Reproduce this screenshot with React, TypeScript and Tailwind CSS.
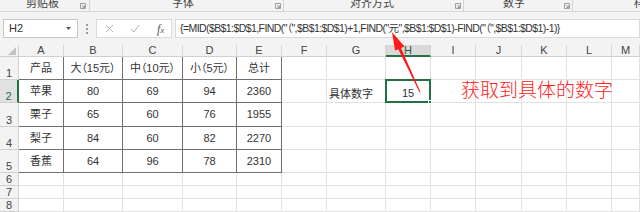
import React from "react";

const cols = [
  { key: "A", w: 45 },
  { key: "B", w: 59 },
  { key: "C", w: 60 },
  { key: "D", w: 54 },
  { key: "E", w: 45 },
  { key: "F", w: 45 },
  { key: "G", w: 59 },
  { key: "H", w: 45 },
  { key: "I", w: 45 },
  { key: "J", w: 46 },
  { key: "K", w: 45 },
  { key: "L", w: 45 },
  { key: "M", w: 28 },
];

const rowHeights = [23, 23, 24, 23, 23, 13, 13, 13];

const table: string[][] = [
  ["产品", "大（15元）", "中（10元）", "小（5元）", "总计"],
  ["苹果", "80", "69", "94", "2360"],
  ["栗子", "65", "60", "76", "1955"],
  ["梨子", "84", "60", "82", "2270"],
  ["香蕉", "64", "96", "78", "2310"],
];

const groups = [
  { label: "剪贴板", left: 26, launcher: 80, sep: 89 },
  { label: "字体", left: 172, launcher: 275, sep: 283 },
  { label: "对齐方式", left: 350, launcher: 455, sep: 463 },
  { label: "数字", left: 503, launcher: 564, sep: 572 },
  { label: "样", left: 634, launcher: -100, sep: -100 },
];

const font = {
  fontFamily: '"Liberation Sans", "Noto Sans CJK SC", sans-serif',
  fontFeatureSettings: '"palt"',
};

function Launcher({ x }: { x: number }) {
  return (
    <svg className="absolute top-[3px]" style={{ left: x }} width="6" height="6" viewBox="0 0 6 6">
      <path d="M0.5 0.5h5v5h-5z" fill="none" stroke="#8a8a8a" strokeWidth="0.8" />
      <path d="M2 2l2.5 2.5M4.5 2.5v2h-2" fill="none" stroke="#8a8a8a" strokeWidth="0.8" />
    </svg>
  );
}

export default function App() {
  const template = `19px ${cols.map((c) => c.w + "px").join(" ")}`;

  return (
    <div className="relative w-[640px] h-[212px] overflow-hidden bg-white text-[#333]" style={font}>
      {/* RIBBON GROUP LABELS */}
      <div className="relative h-[12px] bg-[#f3f3f3] border-b border-[#d6d6d6] overflow-hidden">
        {groups.map((g) => (
          <React.Fragment key={g.label}>
            <span className="absolute top-[-4px] text-[11px] leading-[14px] text-[#444]" style={{ left: g.left }}>
              {g.label}
            </span>
            <Launcher x={g.launcher} />
            <div className="absolute top-0 h-[11px] w-px bg-[#d4d4d4]" style={{ left: g.sep }} />
          </React.Fragment>
        ))}
      </div>

      {/* FORMULA BAR */}
      <div className="flex items-center h-[33px] bg-[#f3f3f3]">
        <div className="ml-[3px] w-[75px] h-[19px] bg-white border border-[#c6c6c6] flex items-center justify-between pl-[5px] pr-[6px]">
          <span className="text-[11px] text-[#333]">H2</span>
          <svg width="5" height="3" viewBox="0 0 5 3">
            <path d="M0 0h5L2.5 3z" fill="#555" />
          </svg>
        </div>
        <div className="w-[18px] flex flex-col items-center gap-[2px]">
          <div className="w-[2px] h-[2px] bg-[#9a9a9a]" />
          <div className="w-[2px] h-[2px] bg-[#9a9a9a]" />
          <div className="w-[2px] h-[2px] bg-[#9a9a9a]" />
        </div>
        <div className="w-[76px] h-[19px] bg-white border border-[#dadada] flex items-center">
          <svg className="ml-[8px]" width="9" height="9" viewBox="0 0 9 9">
            <path d="M1 1l7 7M8 1l-7 7" stroke="#b5b5b5" strokeWidth="1" />
          </svg>
          <svg className="ml-[16px]" width="10" height="9" viewBox="0 0 10 9">
            <path d="M1 5l3 3 5-7" stroke="#b5b5b5" strokeWidth="1" fill="none" />
          </svg>
          <span
            className="ml-[17px] text-[12px] italic text-[#555]"
            style={{ fontFamily: '"Liberation Serif", serif' }}
          >
            f<span className="text-[9px]">x</span>
          </span>
        </div>
        <div className="ml-[3px] flex-1 h-[19px] bg-white border border-[#dadada] flex items-center pl-[4px]">
          <span className="text-[10.5px] tracking-[-0.58px] text-[#333] whitespace-nowrap">
            {'{=MID($B$1:$D$1,FIND("（",$B$1:$D$1)+1,FIND("元",$B$1:$D$1)-FIND("（",$B$1:$D$1)-1)}'}
          </span>
        </div>
      </div>

      {/* SHEET GRID */}
      <div className="grid" style={{ gridTemplateColumns: template, gridTemplateRows: `12px ${rowHeights.map((h) => h + "px").join(" ")}` }}>
        {/* corner */}
        <div className="relative bg-[#f3f3f3] border-r border-b border-[#d0d0d0]">
          <svg className="absolute right-[2px] bottom-[1px]" width="8" height="8" viewBox="0 0 8 8">
            <path d="M8 0v8H0z" fill="#c4c4c4" />
          </svg>
        </div>
        {cols.map((c) => (
          <div
            key={c.key}
            className={`flex items-center justify-center text-[11px] border-r border-[#d6d6d6] ${
              c.key === "H"
                ? "bg-[#d9d9d9] border-b-2 border-b-[#217346] text-[#1f5e3a]"
                : "bg-[#f3f3f3] border-b border-b-[#d0d0d0] text-[#444]"
            }`}
          >
            {c.key}
          </div>
        ))}

        {rowHeights.map((h, r) => (
          <React.Fragment key={r}>
            <div
              className={`flex items-end justify-center text-[11px] leading-[12px] border-b ${
                r === 1
                  ? "bg-[#e1e1e1] text-[#217346] border-r-2 border-r-[#217346] border-b-[#d0d0d0]"
                  : "bg-[#f3f3f3] text-[#444] border-r border-r-[#d0d0d0] border-b-[#d0d0d0]"
              }`}
            >
              {r + 1}
            </div>
            {cols.map((c, ci) => {
              const inTable = r < 5 && ci < 5;
              const val = inTable ? table[r][ci] : "";
              if (r === 1 && c.key === "G") {
                return (
                  <div key={c.key} className="flex items-end pl-[2px] pb-[1px] text-[11px] leading-[14px] text-[#333] border-r border-b border-[#e1e1e1]">
                    具体数字
                  </div>
                );
              }
              if (r === 1 && c.key === "H") {
                return (
                  <div key={c.key} className="relative flex items-end justify-center pb-[1px] text-[11px] leading-[14px] text-[#333] border-2 border-[#217346] -ml-px -mt-px">
                    15
                    <div className="absolute right-[-3px] bottom-[-3px] w-[4px] h-[4px] bg-[#217346] border border-white" />
                  </div>
                );
              }
              return (
                <div
                  key={c.key}
                  className={`flex items-center justify-center text-[11px] whitespace-nowrap ${
                    inTable ? "border-b border-r border-[#6f6f6f]" : "border-b border-r border-[#e1e1e1]"
                  }`}
                >
                  {val}
                </div>
              );
            })}
          </React.Fragment>
        ))}
      </div>

      {/* ANNOTATION */}
      <span
        className="absolute left-[461px] top-[78px] text-[19px] leading-[22px] text-[#ff2020]"
        style={{ fontFamily: '"Noto Sans CJK SC", sans-serif', fontWeight: 300 }}
      >
        获取到具体的数字
      </span>
      <svg className="absolute left-0 top-0 pointer-events-none" width="640" height="212">
        <polygon
          points="392,32 404.5,46.5 401,48 420.5,92 419.5,92.3 398.3,49.3 395,50.6"
          fill="#ff1a1a"
        />
      </svg>
    </div>
  );
}
